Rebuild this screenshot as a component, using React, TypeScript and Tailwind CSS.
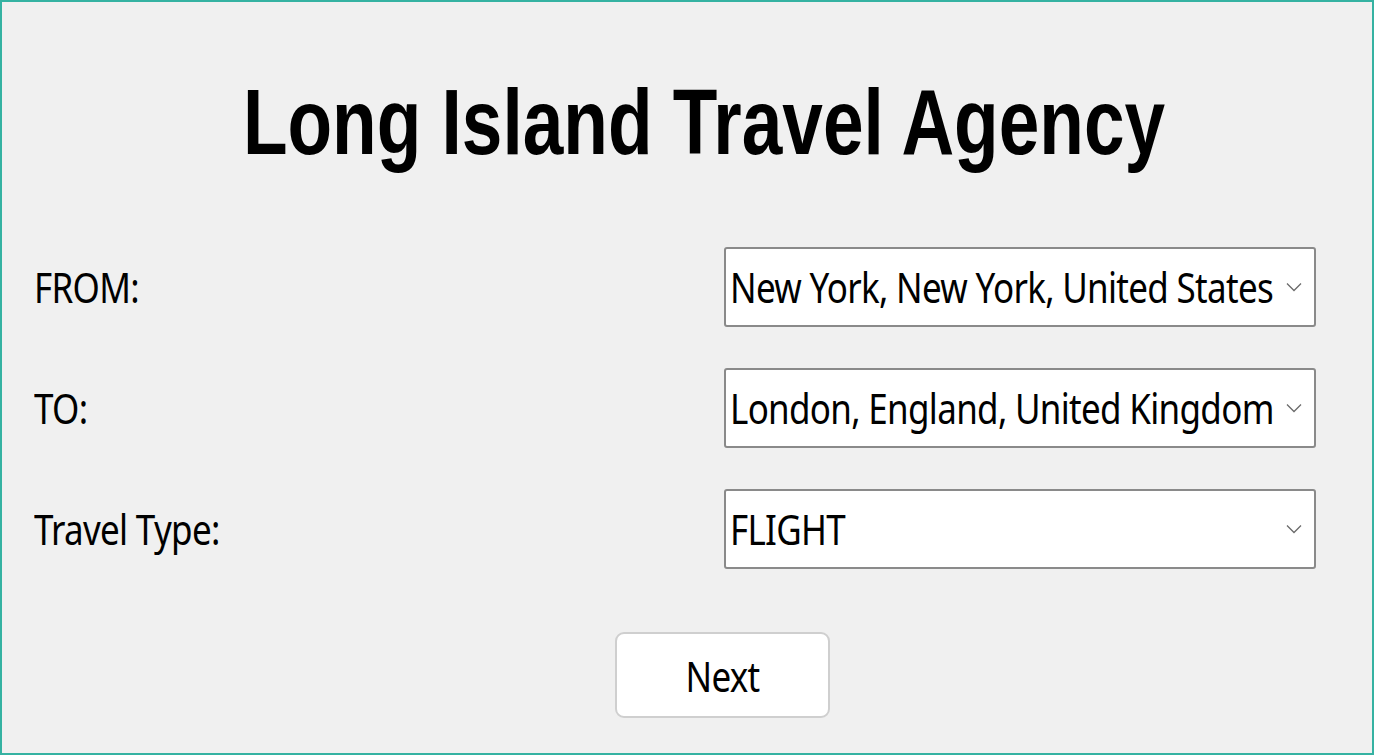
import { useState } from "react";

const fields = [
  { label: "FROM:", value: "New York, New York, United States" },
  { label: "TO:", value: "London, England, United Kingdom" },
  { label: "Travel Type:", value: "FLIGHT" },
];

const bodyText =
  "inline-block scale-y-[1.2] text-[35px] leading-none text-black font-['Noto_Sans',sans-serif] tracking-[-0.7px]";

function Chevron() {
  return (
    <svg width="16" height="10" viewBox="0 0 16 10" className="shrink-0">
      <path d="M1 1.5 L8 8.5 L15 1.5" fill="none" stroke="#6b6b6b" strokeWidth="1.3" />
    </svg>
  );
}

function SelectBox({ value }: { value: string }) {
  return (
    <div className="w-[592px] h-[80px] bg-white border-2 border-[#8a8a8a] rounded-[3px] flex items-center pl-[4px] pr-[12px] gap-[6px]">
      <div className="flex-1 whitespace-nowrap">
        <span className={`${bodyText} origin-left`}>{value}</span>
      </div>
      <Chevron />
    </div>
  );
}

export default function App() {
  const [step] = useState(0);

  return (
    <div className="w-[1374px] h-[755px] bg-[#f0f0f0] border-2 border-[#35b2a2] flex flex-col">
      <div className="pt-[83px] h-[215px] pl-[34px] text-center">
        <span className="inline-block scale-y-[1.28] text-[73px] leading-none font-bold text-black font-['Liberation_Sans',Arial,sans-serif]">
          Long Island Travel Agency
        </span>
      </div>

      <div className="flex flex-col gap-[41px] pt-[30px]" data-step={step}>
        {fields.map((f) => (
          <div key={f.label} className="flex items-center h-[80px] pl-[32px] pr-[56px]">
            <div className="flex-1">
              <span className={bodyText}>{f.label}</span>
            </div>
            <SelectBox value={f.value} />
          </div>
        ))}
      </div>

      <div className="pt-[63px] pl-[613px]">
        <button className="w-[215px] h-[86px] bg-white border-2 border-[#cfcfcf] rounded-[9px] flex items-center justify-center">
          <span className={bodyText}>Next</span>
        </button>
      </div>
    </div>
  );
}
